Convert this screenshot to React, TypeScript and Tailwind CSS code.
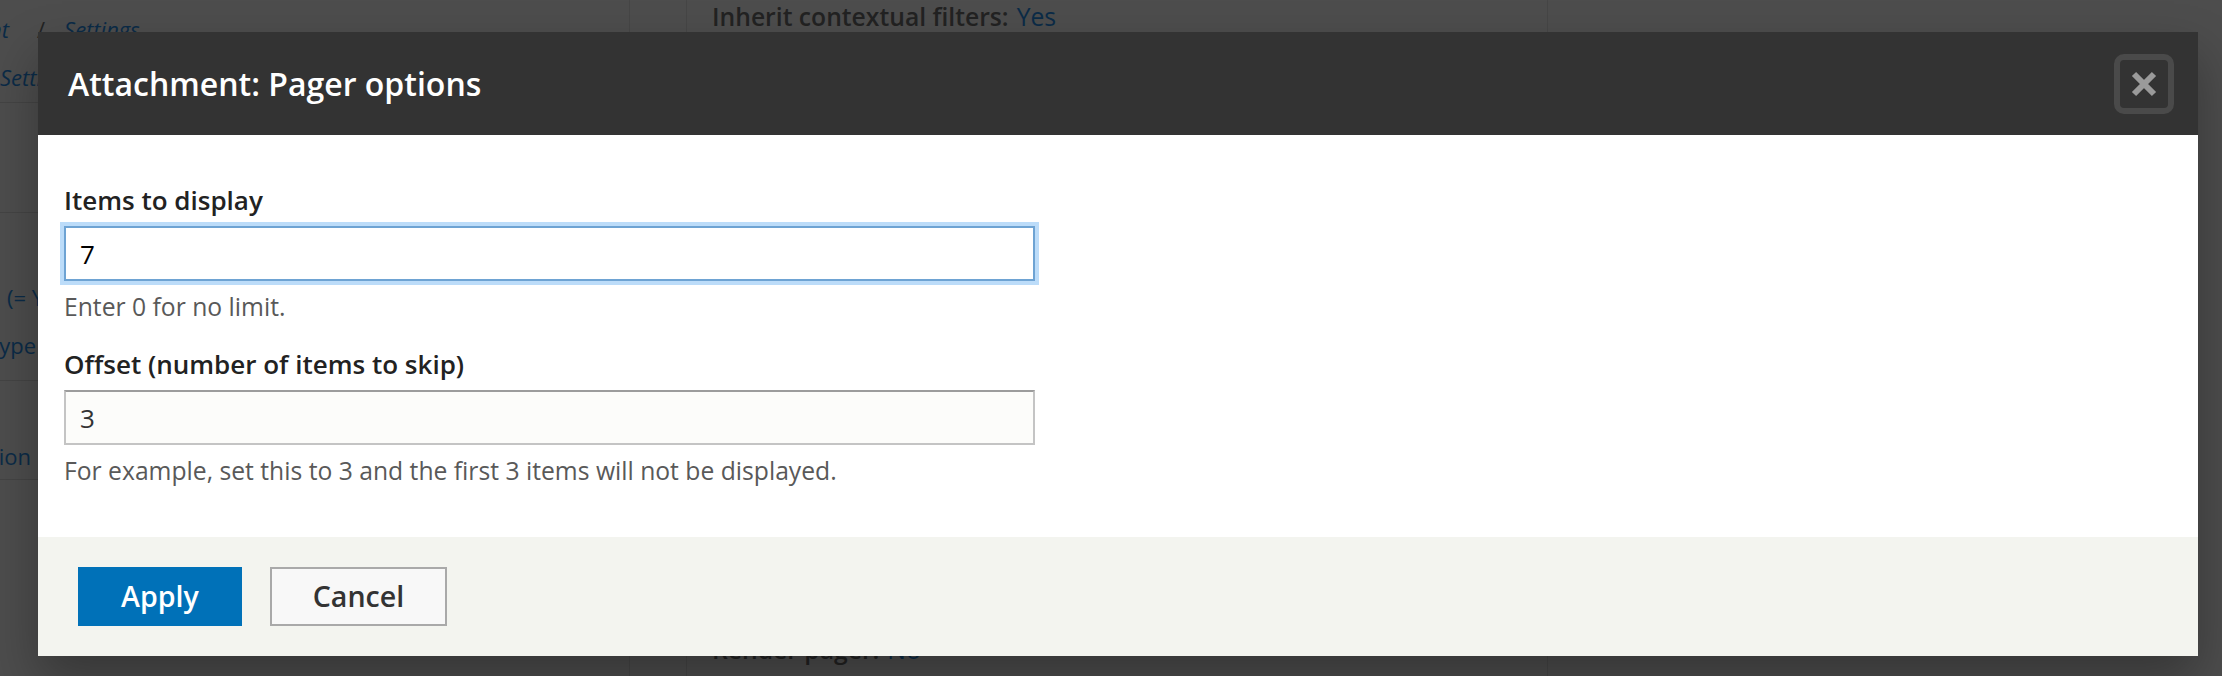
import React from "react"

// page behind the modal, already dimmed by the overlay
const Backdrop = () => {
  return (
    <div className="flex h-full">
      <div className="w-[630px] border-r border-[#464646] text-[22px] italic text-[#0b2b47]">
        <div className="h-[58px] flex items-end pb-[12px] whitespace-nowrap">
          <div className="w-[9px] flex justify-end">
            <span>Content</span>
          </div>
          <span className="ml-[28px] mr-[19px] not-italic text-[#222]">/</span>
          <span>Settings</span>
        </div>
        <div className="h-[45px] border-b border-[#444] flex items-start whitespace-nowrap pt-[4px]">
          <span className="leading-[30px]">Settings</span>
        </div>
        <div className="h-[110px] border-b border-[#444]" />
        <div className="h-[168px] border-b border-[#444] not-italic whitespace-nowrap pt-[67px]">
          <div className="pl-[7px] leading-[34px]">(= Yes)</div>
          <div className="w-[36px] flex justify-end leading-[48px] mt-[7px]">
            <span>Content type</span>
          </div>
        </div>
        <div className="h-[99px] border-b border-[#444] not-italic whitespace-nowrap pt-[57px]">
          <div className="w-[31px] flex justify-end leading-[36px]">
            <span>Pagination</span>
          </div>
        </div>
      </div>
      <div className="w-[57px] border-r border-[#464646]" />
      <div className="w-[861px] border-r border-[#464646] pl-[25px] flex flex-col justify-between text-[24.7px]">
        <div className="leading-[34px] whitespace-nowrap">
          <span className="font-semibold text-[#222]">Inherit contextual filters:</span>
          <span className="ml-[8px] text-[#0b2b47]">Yes</span>
        </div>
        <div className="leading-[34px] whitespace-nowrap mb-[9px]">
          <span className="font-semibold text-[#222]">Render pager:</span>
          <span className="ml-[8px] text-[#0b2b47]">No</span>
        </div>
      </div>
      <div className="flex-1" />
    </div>
  )
}

const CloseIcon = () => (
  <svg width="26" height="26" viewBox="0 0 26 26">
    <path d="M3 3 L23 23 M23 3 L3 23" stroke="#9a9a9a" strokeWidth="6" fill="none" />
  </svg>
)

export default function App() {
  return (
    <div className="relative w-[2222px] h-[676px] overflow-hidden bg-[#4d4d4d] font-['Open_Sans',sans-serif]">
      <Backdrop />

      {/* modal dialog */}
      <div className="absolute left-[38px] top-[32px] w-[2160px] bg-white shadow-[0_24px_48px_rgba(0,0,0,0.3)]">
        <div className="h-[103px] bg-[#333] flex items-center justify-between pl-[30px] pr-[24px]">
          <h2 className="text-[32px] font-semibold text-white">Attachment: Pager options</h2>
          <button className="w-[60px] h-[60px] rounded-[10px] border-[6px] border-[#4a4a4a] bg-[#333] flex items-center justify-center">
            <CloseIcon />
          </button>
        </div>

        <div className="pt-[46px] pb-[48px] pl-[26px] flex flex-col gap-[20px]">
          <div>
            <label className="block text-[26px] leading-[39px] font-semibold text-[#222]">Items to display</label>
            <input
              readOnly
              value="7"
              className="block mt-[6px] w-[971px] h-[55px] border-2 border-[#6ea3d3] px-[14px] text-[26px] text-black outline-none shadow-[0_0_0_4px_#bcdcf9]"
            />
            <div className="mt-[7px] text-[24.7px] leading-[37px] text-[#595959]">Enter 0 for no limit.</div>
          </div>
          <div>
            <label className="block text-[26px] leading-[39px] font-semibold text-[#222]">Offset (number of items to skip)</label>
            <input
              readOnly
              value="3"
              className="block mt-[6px] w-[971px] h-[55px] border-2 border-[#c4c4c4] border-t-[#9c9c9c] bg-[#fcfcfa] px-[14px] text-[26px] text-[#333] outline-none"
            />
            <div className="mt-[7px] text-[24.7px] leading-[37px] text-[#595959]">
              For example, set this to 3 and the first 3 items will not be displayed.
            </div>
          </div>
        </div>

        <div className="bg-[#f3f4ef] py-[30px] pl-[40px] flex gap-[28px]">
          <button className="w-[164px] h-[59px] bg-[#0071b8] text-white text-[28.6px] font-semibold">Apply</button>
          <button className="w-[177px] h-[59px] border-2 border-[#a9a9a9] bg-[#f8f8f8] text-[#333] text-[28.6px] font-semibold">
            Cancel
          </button>
        </div>
      </div>
    </div>
  )
}
